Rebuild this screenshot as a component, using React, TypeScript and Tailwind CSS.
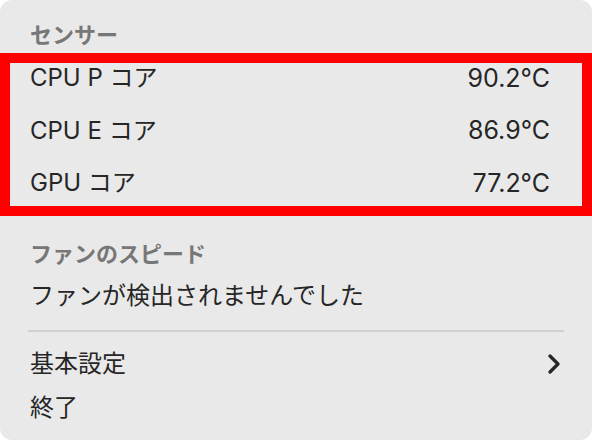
const font = { fontFamily: '"Inter", "Noto Sans CJK JP", sans-serif' }

const sensors = [
  { name: "CPU P コア", value: "90.2°C" },
  { name: "CPU E コア", value: "86.9°C" },
  { name: "GPU コア", value: "77.2°C" },
]

function Chevron() {
  return (
    <svg width="14" height="20" viewBox="0 0 14 20" fill="none">
      <polyline points="3,2 11,10 3,18" stroke="#262626" strokeWidth="3.2" strokeLinecap="round" strokeLinejoin="round" />
    </svg>
  )
}

export default function App() {
  return (
    <div className="w-[592px] h-[440px] bg-white" style={font}>
      <div className="relative w-full h-full rounded-[12px] bg-[#e9e9e9] text-[#262626] flex flex-col pt-[18px] px-[30px]">
        <div className="h-[34px] flex items-center text-[22px] font-bold text-[#777777] leading-none">センサー</div>

        {sensors.map((s) => (
          <div key={s.name} className="h-[52.5px] flex items-center justify-between text-[24px] leading-none pr-[12px]">
            <span>{s.name}</span>
            <span className="text-[25px]">{s.value}</span>
          </div>
        ))}

        <div className="h-[29px]" />
        <div className="h-[30px] flex items-center text-[22px] font-bold text-[#777777] leading-none">ファンのスピード</div>
        <div className="h-[55px] flex items-center text-[24px] leading-none">ファンが検出されませんでした</div>

        <div className="h-[15px] flex items-center -mx-[2px]">
          <div className="w-full h-[2px] bg-[#d0d0d0]" />
        </div>

        <div className="h-[51px] flex items-center justify-between text-[24px] leading-none pr-[1px]">
          <span>基本設定</span>
          <Chevron />
        </div>
        <div className="h-[37px] flex items-center text-[24px] leading-none">終了</div>

        <div className="absolute left-0 right-0 top-[53px] h-[163px] border-[10px] border-[#ff0000] pointer-events-none" />
      </div>
    </div>
  )
}
